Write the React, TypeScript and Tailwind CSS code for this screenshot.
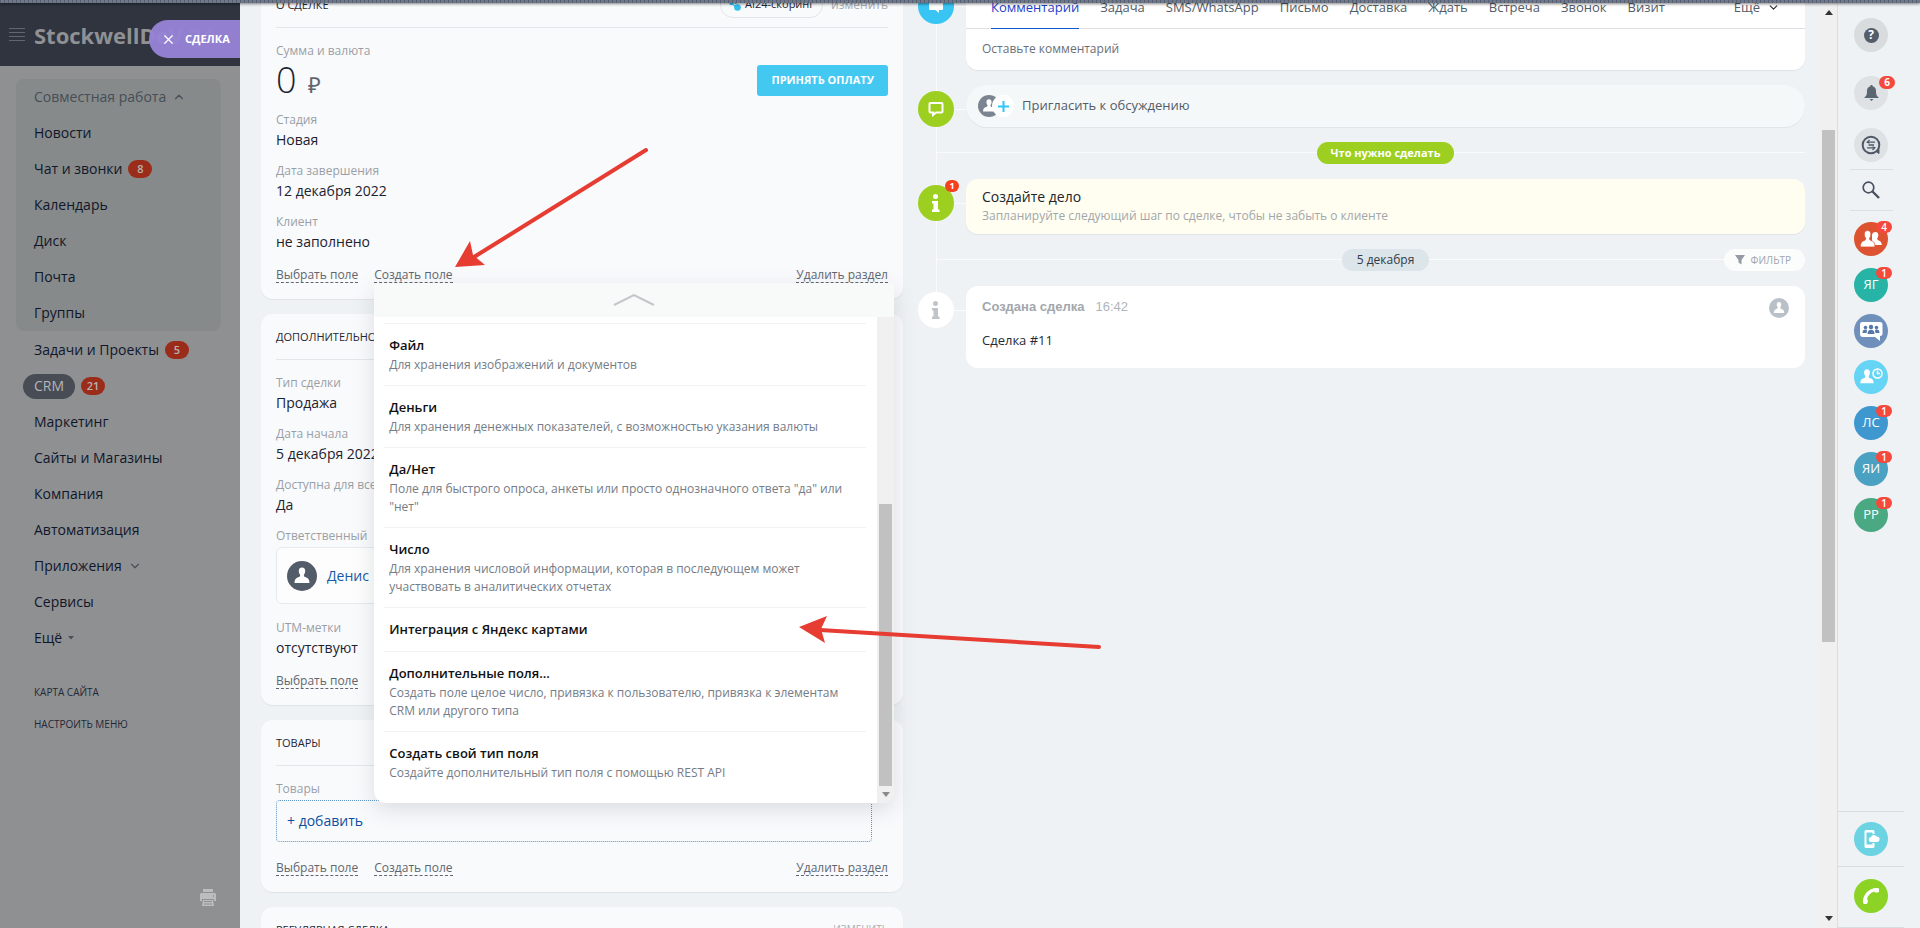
import { ReactNode } from 'react';
import { ChevronDown, ChevronUp, X } from 'lucide-react';

interface MenuItem {
  label: string;
  badge?: number;
  active?: boolean;
  arrow?: 'chevron' | 'caret';
}

const groupItems: MenuItem[] = [
  { label: 'Новости' },
  { label: 'Чат и звонки', badge: 8 },
  { label: 'Календарь' },
  { label: 'Диск' },
  { label: 'Почта' },
  { label: 'Группы' },
];

const menuItems: MenuItem[] = [
  { label: 'Задачи и Проекты', badge: 5 },
  { label: 'CRM', badge: 21, active: true },
  { label: 'Маркетинг' },
  { label: 'Сайты и Магазины' },
  { label: 'Компания' },
  { label: 'Автоматизация' },
  { label: 'Приложения', arrow: 'chevron' },
  { label: 'Сервисы' },
  { label: 'Ещё', arrow: 'caret' },
];

const fieldTypes = [
  { title: 'Файл', text: 'Для хранения изображений и документов' },
  { title: 'Деньги', text: 'Для хранения денежных показателей, с возможностью указания валюты' },
  { title: 'Да/Нет', text: 'Поле для быстрого опроса, анкеты или просто однозначного ответа "да" или "нет"' },
  { title: 'Число', text: 'Для хранения числовой информации, которая в последующем может участвовать в аналитических отчетах' },
  { title: 'Интеграция с Яндекс картами', text: '' },
  { title: 'Дополнительные поля...', text: 'Создать поле целое число, привязка к пользователю, привязка к элементам CRM или другого типа' },
  { title: 'Создать свой тип поля', text: 'Создайте дополнительный тип поля с помощью REST API' },
];

const tabs = ['Комментарий', 'Задача', 'SMS/WhatsApp', 'Письмо', 'Доставка', 'Ждать', 'Встреча', 'Звонок', 'Визит'];

function PersonGlyph({ className }: { className?: string }) {
  return (
    <svg viewBox="0 0 20 20" className={className} fill="currentColor" aria-hidden="true">
      <path d="M10 1.500c2.200 0 3.300 1.500 3.200 3.600 0 1.500-.5 2.900-1.300 3.700-.2 1.500.3 2 1.700 2.500 2.300.8 3.600 1.700 3.900 5.700H2.500c.3-4 1.600-4.900 3.900-5.700 1.400-.5 1.900-1 1.700-2.500-.8-.8-1.300-2.200-1.300-3.700C6.700 3 7.800 1.500 10 1.500z" />
    </svg>
  );
}

function SidebarItem({ item }: { item: MenuItem }) {
  return (
    <li className="flex h-9 items-center gap-[6px]">
      <a
        href="#"
        className={
          item.active
            ? '-ml-[11px] flex h-[25px] items-center rounded-full bg-[#474c55] px-[11px] text-[#b4b6b9]'
            : 'text-[#10172a]'
        }
      >
        {item.label}
      </a>
      {item.badge && (
        <span className="flex h-[18px] w-6 items-center justify-center rounded-full bg-[#9b2c19] text-[11px] font-semibold text-[#b9b4b4]">
          {item.badge}
        </span>
      )}
      {item.arrow === 'chevron' && <ChevronDown size={14} className="text-[#4a5058]" />}
      {item.arrow === 'caret' && (
        <svg width="6" height="4" viewBox="0 0 6 4" fill="#4a5058" aria-hidden="true">
          <path d="M0 0h6L3 3.500z" />
        </svg>
      )}
    </li>
  );
}

function Sidebar() {
  return (
    <aside className="flex w-60 shrink-0 flex-col bg-[#8f9092]">
      <header className="relative flex h-[63px] shrink-0 items-center gap-[9px] overflow-hidden bg-[#2f343f] pl-[9px] text-[#8f9194]">
        <button aria-label="Меню">
          <svg width="16" height="13" viewBox="0 0 16 13" stroke="#62666d" aria-hidden="true">
            <path d="M0 .5h16M0 4.500h16M0 8.500h16M0 12.500h16" />
          </svg>
        </button>
        <span className="whitespace-nowrap text-[22px] leading-8 font-bold">StockwellDeV 24</span>
        <button className="absolute top-[17px] right-0 flex h-[38px] w-[91px] items-center gap-[9px] rounded-l-full bg-[#9682d5]/97 pl-3 text-[11px] font-bold text-white">
          <X size={15} strokeWidth={2} />
          СДЕЛКА
        </button>
      </header>

      <nav className="pt-[13px] text-sm leading-5">
        <div className="mr-[19px] ml-4 rounded-lg bg-[#868a8a] pl-[18px]">
          <button className="flex h-9 items-center gap-[6px] text-[#474e57]">
            Совместная работа
            <ChevronUp size={14} />
          </button>
          <ul>
            {groupItems.map((item) => (
              <SidebarItem key={item.label} item={item} />
            ))}
          </ul>
        </div>
        <ul className="pt-px pl-[34px]">
          {menuItems.map((item) => (
            <SidebarItem key={item.label} item={item} />
          ))}
        </ul>
      </nav>

      <div className="mt-7 flex flex-col gap-4 pl-[34px] text-[10px] leading-4 text-[#1f2937]">
        <a href="#">КАРТА САЙТА</a>
        <a href="#">НАСТРОИТЬ МЕНЮ</a>
      </div>

      <button aria-label="Печать" className="mt-auto mr-6 mb-[22px] self-end">
        <svg width="16" height="17" viewBox="0 0 16 17" fill="#bcbdbf">
          <path d="M3 0h10v3H3zM1.500 4h13a1.500 1.500 0 0 1 1.500 1.500V12h-2v-2H2v2H0V5.500A1.500 1.500 0 0 1 1.500 4zM3 11h10l1 6H2z" />
          <path d="M4 12.500h8M4 15h8" stroke="#8f9092" />
          <circle cx="13.500" cy="7" r=".8" fill="#8f9092" />
        </svg>
      </button>
    </aside>
  );
}

function Card({ title, actions, children }: { title: string; actions?: ReactNode; children?: ReactNode }) {
  return (
    <section className="rounded-xl bg-[#f9fafc] px-[15px] shadow-[0_1px_1px_rgba(0,0,0,0.06)]">
      <div className="flex h-[46px] items-center justify-between border-b border-[#e4e7ea]">
        <h2 className="text-[11px] leading-4 text-[#1f2733]">{title}</h2>
        <div className="flex items-center gap-2 text-[#a8adb4]">{actions}</div>
      </div>
      <div className="flex flex-col gap-[11px] pt-[15px]">{children}</div>
    </section>
  );
}

function Field({ label, value }: { label: string; value: string }) {
  return (
    <div>
      <div className="text-xs leading-4 text-[#9a9fa6]">{label}</div>
      <div className="text-sm leading-6 text-[#1c2230]">{value}</div>
    </div>
  );
}

const linkClass = 'block border-b border-dashed border-[#5f6670] text-xs leading-[14px] text-[#5f6670]';

function CardFooter({ menu }: { menu?: ReactNode }) {
  return (
    <div className="flex items-center gap-4 pt-[3px] pb-4">
      <a href="#" className={linkClass}>
        Выбрать поле
      </a>
      <div className="relative">
        <a href="#" className={linkClass}>
          Создать поле
        </a>
        {menu}
      </div>
      <a href="#" className={`ml-auto ${linkClass}`}>
        Удалить раздел
      </a>
    </div>
  );
}

function FieldTypeMenu() {
  return (
    <div className="absolute top-full left-0 z-10 w-[520px] overflow-hidden rounded-b-xl bg-white shadow-[0_7px_21px_rgba(83,92,105,0.18)]">
      <button aria-label="Прокрутить вверх" className="flex h-[34px] w-full items-center justify-center bg-[#f8faf9]">
        <svg width="42" height="12" viewBox="0 0 42 12" fill="none" stroke="#c3c7cb" strokeWidth="2">
          <path d="M1 11 21 1l20 10" />
        </svg>
      </button>
      <div className="flex">
        <ul className="flex-1 pt-[6px] pr-[11px] pb-[10px] pl-[10px]">
          {fieldTypes.map((type) => (
            <li key={type.title} className="border-t border-[#f0f2f3]">
              <button className="w-full pt-[10px] pr-2 pb-[11px] pl-[5px] text-left">
                <span className="block text-[13px] leading-[22px] font-semibold text-[#111]">{type.title}</span>
                {type.text && <span className="block text-xs leading-[18px] text-[#757c86]">{type.text}</span>}
              </button>
            </li>
          ))}
        </ul>
        <div className="flex w-[17px] flex-col items-center justify-end bg-[#f0f0f0]">
          <div className="h-[282px] w-[13px] bg-[#c1c1c1]" />
          <div className="flex h-[17px] items-center">
            <svg width="8" height="5" viewBox="0 0 8 5" fill="#8b8b8b" aria-hidden="true">
              <path d="M0 0h8L4 5z" />
            </svg>
          </div>
        </div>
      </div>
    </div>
  );
}

function DealCards() {
  return (
    <div className="-mt-[21px] flex min-w-0 flex-[642] flex-col gap-[15px]">
      <Card
        title="О СДЕЛКЕ"
        actions={
          <>
            <button className="flex h-[26px] items-center gap-1 rounded-full border border-[#e2e5e8] px-2 text-[11px] text-[#1f2733]">
              <svg width="12" height="12" viewBox="0 0 12 12" fill="#2fc0ee" aria-hidden="true">
                <circle cx="2.500" cy="4" r="2.200" />
                <circle cx="8.500" cy="8.500" r="3.300" />
                <circle cx="6.500" cy="3.500" r="1.500" />
                <path d="M2 4.500l6 2.500-1 2z" />
              </svg>
              AI24-скоринг
            </button>
            <a href="#" className="text-xs">
              изменить
            </a>
          </>
        }
      >
        <div>
          <div className="text-xs leading-4 text-[#9a9fa6]">Сумма и валюта</div>
          <div className="flex h-[42px] items-center justify-between">
            <div className="flex items-baseline gap-[11px]">
              <span className="text-4xl leading-[42px] font-light text-[#1c2632]">0</span>
              <span className="text-[22px] leading-8 text-[#60666e]">₽</span>
            </div>
            <button className="h-[31px] rounded-[3px] bg-[#43c8f2] px-[14px] text-[11px] font-bold text-white">
              ПРИНЯТЬ ОПЛАТУ
            </button>
          </div>
        </div>
        <Field label="Стадия" value="Новая" />
        <Field label="Дата завершения" value="12 декабря 2022" />
        <Field label="Клиент" value="не заполнено" />
        <CardFooter menu={<FieldTypeMenu />} />
      </Card>

      <Card title="ДОПОЛНИТЕЛЬНО">
        <Field label="Тип сделки" value="Продажа" />
        <Field label="Дата начала" value="5 декабря 2022" />
        <Field label="Доступна для всех" value="Да" />
        <div>
          <div className="text-xs leading-4 text-[#9a9fa6]">Ответственный</div>
          <div className="mt-[3px] mb-[5px] flex h-[57px] items-center gap-[10px] rounded-md border border-[#e7eaec] bg-[#fdfdfd] px-[10px]">
            <span className="flex size-[30px] items-center justify-center rounded-full bg-[#535c69] text-white">
              <PersonGlyph className="size-5" />
            </span>
            <a href="#" className="text-sm text-[#1559a8]">
              Денис
            </a>
          </div>
        </div>
        <Field label="UTM-метки" value="отсутствуют" />
        <CardFooter />
      </Card>

      <Card title="ТОВАРЫ">
        <div>
          <div className="text-xs leading-4 text-[#9a9fa6]">Товары</div>
          <button className="mt-[3px] mr-4 mb-[5px] block h-[42px] w-[calc(100%-16px)] rounded-sm border border-dotted border-[#5e94c4] px-[10px] text-left text-sm text-[#0b4fa0]">
            + добавить
          </button>
        </div>
        <CardFooter />
      </Card>

      <Card
        title="РЕГУЛЯРНАЯ СДЕЛКА"
        actions={
          <a href="#" className="text-[10px]">
            ИЗМЕНИТЬ
          </a>
        }
      />
    </div>
  );
}

function TimelineRow({ icon, last, children }: { icon: ReactNode; last?: boolean; children: ReactNode }) {
  return (
    <div className="flex gap-3">
      <div className="relative w-9 shrink-0 pt-[6px]">
        {!last && <div className="absolute top-0 -bottom-[60px] left-[18px] w-px bg-[#fafbfc]" />}
        <div className="absolute top-6 left-full h-px w-3 bg-[#fafbfc]" />
        <div className="relative">{icon}</div>
      </div>
      <div className="min-w-0 flex-1">{children}</div>
    </div>
  );
}

function TimelineDivider({ children, aside }: { children: ReactNode; aside?: ReactNode }) {
  return (
    <div className="relative flex h-[22px] items-center justify-center pl-12">
      <div className="absolute top-[10px] right-0 left-[18px] h-px bg-[#fafbfc]" />
      <div className="relative">{children}</div>
      {aside && <div className="absolute right-0">{aside}</div>}
    </div>
  );
}

function InfoGlyph() {
  return (
    <svg width="10" height="18" viewBox="0 0 10 18" fill="currentColor" aria-hidden="true">
      <circle cx="4.500" cy="2.500" r="2.500" />
      <path d="M1 7h6v8.500h1.500V18H1v-2.500h1.500v-6H1z" />
    </svg>
  );
}

function Timeline() {
  return (
    <div className="-mt-[21px] flex min-w-0 flex-[887] flex-col gap-[15px]">
      <TimelineRow
        icon={
          <div className="flex size-9 items-center justify-center rounded-full bg-[#39c5f3] text-white">
            <svg width="16" height="16" viewBox="0 0 16 16" fill="currentColor" aria-hidden="true">
              <path d="M2 1h12a1 1 0 0 1 1 1v9a1 1 0 0 1-1 1h-3v3l-3.500-3H2a1 1 0 0 1-1-1V2a1 1 0 0 1 1-1z" />
            </svg>
          </div>
        }
      >
        <div className="rounded-b-xl bg-white shadow-[0_1px_1px_rgba(0,0,0,0.06)]">
          <div className="flex h-[47px] items-stretch gap-[21px] border-b border-[#dfe0e3] px-[25px] text-[13px] text-[#535c69]">
            {tabs.map((tab, index) => (
              <button
                key={tab}
                className={index === 0 ? '-mb-px border-b border-[#1058d0] pt-[5px] text-[#1f3fcb]' : 'pt-[5px]'}
              >
                {tab}
              </button>
            ))}
            <button className="ml-auto flex items-center gap-[7px] pt-[5px]">
              Ещё
              <ChevronDown size={13} className="text-[#222b38]" />
            </button>
          </div>
          <input
            aria-label="Комментарий"
            placeholder="Оставьте комментарий"
            className="block h-[41px] w-full px-4 pb-[2px] text-xs outline-none placeholder:text-[#6a7078]"
          />
        </div>
      </TimelineRow>

      <TimelineRow
        icon={
          <div className="flex size-9 items-center justify-center rounded-full bg-[#9dcf20] text-white">
            <svg width="16" height="16" viewBox="0 0 16 16" fill="none" stroke="currentColor" strokeWidth="2" aria-hidden="true">
              <path d="M2.500 2h11a1 1 0 0 1 1 1v7.500a1 1 0 0 1-1 1H8L5 14v-2.500H2.500a1 1 0 0 1-1-1V3a1 1 0 0 1 1-1z" />
            </svg>
          </div>
        }
      >
        <button className="flex h-[42px] w-full items-center rounded-full bg-[#f5f8f9] pl-3 text-left text-[13px] text-[#535c69] shadow-[0_1px_1px_rgba(0,0,0,0.06)]">
          <span className="flex size-[22px] items-center justify-center rounded-full bg-[#7b8491] text-white">
            <PersonGlyph className="size-4" />
          </span>
          <span className="relative -ml-2 mr-2 flex size-[22px] items-center justify-center rounded-full bg-white">
            <svg width="11" height="11" viewBox="0 0 11 11" stroke="#2fc6f6" strokeWidth="2" aria-hidden="true">
              <path d="M5.500 0v11M0 5.500h11" />
            </svg>
          </span>
          Пригласить к обсуждению
        </button>
      </TimelineRow>

      <TimelineDivider>
        <span className="flex h-[22px] items-center rounded-full bg-[#9dcf20] px-[14px] text-[11px] font-bold text-white">
          Что нужно сделать
        </span>
      </TimelineDivider>

      <TimelineRow
        icon={
          <div className="relative flex size-9 items-center justify-center rounded-full bg-[#9dcf20] text-white">
            <InfoGlyph />
            <span className="absolute -top-[5px] -right-[5px] flex h-3 w-[14px] items-center justify-center rounded-full bg-[#f4411e] text-[9px] font-bold">
              1
            </span>
          </div>
        }
      >
        <div className="h-[55px] rounded-xl bg-[#fffef0] px-4 pt-2 shadow-[0_1px_1px_rgba(0,0,0,0.06)]">
          <div className="text-sm leading-5 text-[#20242b]">Создайте дело</div>
          <div className="text-xs leading-[18px] text-[#a2a7ad]">
            Запланируйте следующий шаг по сделке, чтобы не забыть о клиенте
          </div>
        </div>
      </TimelineRow>

      <TimelineDivider
        aside={
          <button className="flex h-[22px] items-center gap-[6px] rounded-full bg-[#fbfdfd] px-[11px] text-[10px] text-[#a0a6ad]">
            <svg width="10" height="10" viewBox="0 0 10 10" fill="#959ba3" aria-hidden="true">
              <path d="M0 0h10L6.500 5v4.500L3.500 7.500V5z" />
            </svg>
            <span className="pr-[3px]">ФИЛЬТР</span>
          </button>
        }
      >
        <span className="flex h-[22px] items-center rounded-full bg-[#dce5e9] px-[15px] text-xs text-[#333b48]">
          5 декабря
        </span>
      </TimelineDivider>

      <TimelineRow
        last
        icon={
          <div className="flex size-9 items-center justify-center rounded-full bg-white text-[#c0c4c9]">
            <InfoGlyph />
          </div>
        }
      >
        <div className="flex h-[82px] justify-between rounded-xl bg-white pt-[11px] pr-4 pl-4">
          <div>
            <div className="flex gap-[11px] font-['Liberation_Sans',sans-serif] text-[13px] leading-5 text-[#b0b5bb]">
              <span className="font-bold text-[#a2a7ad]">Создана сделка</span>
              <span>16:42</span>
            </div>
            <div className="mt-[13px] text-[13px] leading-5 text-[#252b35]">Сделка #11</div>
          </div>
          <span className="mt-px flex size-5 items-center justify-center rounded-full bg-[#b9c0c8] text-white">
            <PersonGlyph className="size-[14px]" />
          </span>
        </div>
      </TimelineRow>
    </div>
  );
}

function PageScrollbar() {
  return (
    <div className="flex w-[17px] shrink-0 flex-col items-center justify-between bg-[#f0f0f0] py-[7px]">
      <svg width="8" height="5" viewBox="0 0 8 5" fill="#333" aria-hidden="true">
        <path d="M0 5h8L4 0z" />
      </svg>
      <div className="flex w-full flex-1 flex-col items-center">
        <div className="w-full flex-[115]" />
        <div className="w-[13px] flex-[511] bg-[#c1c1c1]" />
        <div className="flex-[274]" />
      </div>
      <svg width="8" height="5" viewBox="0 0 8 5" fill="#333" aria-hidden="true">
        <path d="M0 0h8L4 5z" />
      </svg>
    </div>
  );
}

function RoundButton({ label, color, badge, children }: { label: string; color: string; badge?: number; children: ReactNode }) {
  return (
    <button
      aria-label={label}
      className={`relative flex size-[34px] shrink-0 items-center justify-center rounded-full text-[13px] font-medium text-white ${color}`}
    >
      {children}
      {badge && (
        <span className="absolute -top-px -right-1 flex h-3 w-4 items-center justify-center rounded-full bg-[#f5493c] text-[10px] font-semibold">
          {badge}
        </span>
      )}
    </button>
  );
}

function RightPanel() {
  return (
    <aside className="w-[83px] shrink-0 border-l border-[#d5dfe5]">
      <div className="flex h-full w-[66px] flex-col items-center pt-[15px]">
        <RoundButton label="Помощь" color="bg-[#d9dcdf]">
          <span className="flex size-[15px] items-center justify-center rounded-full bg-[#535c69] text-xs font-bold">?</span>
        </RoundButton>
        <button
          aria-label="Уведомления"
          className="relative mt-6 flex size-[34px] items-center justify-center rounded-full bg-[#dfe2e5] text-white"
        >
          <svg width="15" height="16" viewBox="0 0 15 16" fill="#5c6572">
            <path d="M7.500 0c.8 0 1.200.5 1.200 1.200C11 1.800 12 3.500 12 6c0 3.500.5 5 2.500 6.300V13H.5v-.7C2.500 11 3 9.500 3 6c0-2.500 1-4.200 3.300-4.800C6.300.5 6.700 0 7.500 0zM5.500 14h4l-2 2z" />
          </svg>
          <span className="absolute top-0 -right-[7px] flex h-[13px] w-4 items-center justify-center rounded-full bg-[#f5493c] text-[10px] font-bold">
            6
          </span>
        </button>
        <button
          aria-label="Открытые линии"
          className="mt-[18px] flex size-[34px] items-center justify-center rounded-full bg-[#dfe2e5]"
        >
          <svg width="20" height="20" viewBox="0 0 20 20" fill="none" stroke="#4f5866" strokeWidth="2">
            <circle cx="10" cy="10" r="8.300" />
            <path d="M15 16.500l3 2v-4z" fill="#4f5866" strokeWidth="1" />
            <path d="M6 7.200h8M7.500 10H13M6 12.800h8" strokeWidth="1.300" />
            <path d="M8.500 5 6.200 7.200l2.300 1M11.500 11.800l2.300 1-2.300 2.200" strokeWidth="1.200" />
          </svg>
        </button>
        <div className="mt-[7px] h-px w-[43px] shrink-0 bg-[#dbe0e4]" />
        <button aria-label="Поиск" className="flex h-10 shrink-0 items-center">
          <svg width="18" height="18" viewBox="0 0 18 18" fill="none" stroke="#48515e">
            <circle cx="6.500" cy="6.500" r="5.300" strokeWidth="1.700" />
            <path d="M10.500 10.500 17 17" strokeWidth="2.400" />
          </svg>
        </button>
        <div className="h-px w-[43px] shrink-0 bg-[#dbe0e4]" />

        <div className="mt-[11px] flex flex-col gap-3">
          <RoundButton label="Общий чат" color="bg-[#dd5230]" badge={4}>
            <svg width="22" height="18" viewBox="0 0 22 18" fill="white">
              <path d="M15.500 2c2 0 2.900 1.400 2.800 3.200 0 1.300-.4 2.400-1.100 3.100-.1 1.200.3 1.700 1.500 2.200 1.900.7 2.800 1.500 3.100 4.500H12V5c.2-1.800 1.500-3 3.500-3z" />
              <path
                stroke="#dd5230"
                strokeWidth=".8"
                d="M7.500.5c2.400 0 3.500 1.700 3.400 3.900 0 1.500-.5 2.900-1.300 3.700-.2 1.500.3 2 1.800 2.600 2.300.8 3.300 2 3.600 6.300H.3c.3-4.300 1.300-5.500 3.600-6.300 1.400-.5 1.900-1.100 1.700-2.600-.8-.8-1.300-2.200-1.300-3.700C4.200 2.200 5.200.5 7.500.5z"
              />
            </svg>
          </RoundButton>
          <RoundButton label="ЯГ" color="bg-[#27b3a5]" badge={1}>
            ЯГ
          </RoundButton>
          <RoundButton label="Групповой чат" color="bg-[#6f90ba]">
            <svg width="24" height="24" viewBox="0 0 24 24" fill="white">
              <path d="M3 3h18a2.500 2.500 0 0 1 2.500 2.500v9A2.500 2.500 0 0 1 21 17v5l-5-4H4a3 3 0 0 1-3-3V5.500A2.500 2.500 0 0 1 3 3z" />
              <g fill="#5578a8">
                <circle cx="6.500" cy="8.500" r="1.800" />
                <circle cx="12" cy="8" r="2.200" />
                <circle cx="17.500" cy="8.500" r="1.800" />
                <path d="M3.500 14c0-2.500 1-3.500 3-3.500 1 0 1.500.5 1.500 1L7.500 14zM8.500 15c0-3 1.500-4.200 3.500-4.200s3.500 1.200 3.500 4.200zM20.500 14c0-2.500-1-3.500-3-3.500-1 0-1.500.5-1.500 1l.5 2.500z" />
              </g>
            </svg>
          </RoundButton>
          <RoundButton label="Напоминания" color="bg-[#66d5f5]">
            <PersonGlyph className="absolute left-[4px] size-[18px]" />
            <svg width="11" height="11" viewBox="0 0 11 11" fill="none" stroke="white" strokeWidth="1.500" className="absolute top-2 right-[5px]">
              <circle cx="5.500" cy="5.500" r="4.500" />
              <path d="M5.500 2.500v3H8" />
            </svg>
          </RoundButton>
          <RoundButton label="ЛС" color="bg-[#3e97cf]" badge={1}>
            ЛС
          </RoundButton>
          <RoundButton label="ЯИ" color="bg-[#4ba1c1]" badge={1}>
            ЯИ
          </RoundButton>
          <RoundButton label="РР" color="bg-[#4aa983]" badge={1}>
            РР
          </RoundButton>
        </div>

        <div className="mt-auto flex w-full justify-center border-t border-[#d3dde2] py-[10px]">
          <RoundButton label="Мобильное приложение" color="bg-[#6bd3e1]">
            <svg width="18" height="20" viewBox="0 0 18 20" fill="white">
              <path d="M4 1h7a1.500 1.500 0 0 1 1.500 1.500V5h-2V3.500H4.500v12h6V14h2v3.500A1.500 1.500 0 0 1 11 19H4a1.500 1.500 0 0 1-1.500-1.500v-15A1.500 1.500 0 0 1 4 1z" />
              <path d="M9.500 13a2.500 2.500 0 0 1-.5-5 3 3 0 0 1 5.500-.5 2.800 2.800 0 0 1 1 5.500z" />
            </svg>
          </RoundButton>
        </div>
        <div className="flex w-full justify-center border-y border-[#d3dde2] pt-3 pb-[14px]">
          <RoundButton label="Позвонить" color="bg-[#8dd325]">
            <svg width="18" height="18" viewBox="0 0 18 18" fill="white">
              <path d="M1 15.500C.3 8 7 .5 15.500 1c.8 0 1.500.5 1.500 1.300v1.900c0 .7-.5 1.200-1.200 1.200h-2.300c-.7 0-1.100-.3-1.200-.9C8 6 5.600 8.800 5 12.200c.6.200.9.700.9 1.300l-.4 2.300c-.1.700-.6 1.100-1.300 1.100H2.500c-.8 0-1.400-.5-1.500-1.400z" />
            </svg>
          </RoundButton>
        </div>
      </div>
    </aside>
  );
}

function Arrows() {
  return (
    <svg className="pointer-events-none absolute inset-0 z-20 size-full" fill="#e63c32" stroke="#e63c32" aria-hidden="true">
      <path d="M646 150 474 257" strokeWidth="4" strokeLinecap="round" />
      <path d="m455 267 15-26 3 14 12 10z" stroke="none" />
      <path d="M1099 647 820 630" strokeWidth="4" strokeLinecap="round" />
      <path d="m799 627 28-11-6 13 4 14z" stroke="none" />
    </svg>
  );
}

export default function App() {
  return (
    <div className="relative flex h-screen flex-col overflow-hidden bg-[#eef2f5] font-['Open_Sans',sans-serif]">
      <div className="z-10 h-[3px] shrink-0 bg-[#667082] bg-[repeating-linear-gradient(90deg,#566072_0_1px,#6e788a_1px_4px)] shadow-[0_1px_3px_rgba(0,0,0,0.5)]" />
      <div className="flex min-h-0 flex-1">
        <Sidebar />
        <main className="flex min-w-0 flex-1 gap-[15px] overflow-hidden pr-[15px] pl-[21px]">
          <DealCards />
          <Timeline />
        </main>
        <PageScrollbar />
        <RightPanel />
      </div>
      <Arrows />
    </div>
  );
}
